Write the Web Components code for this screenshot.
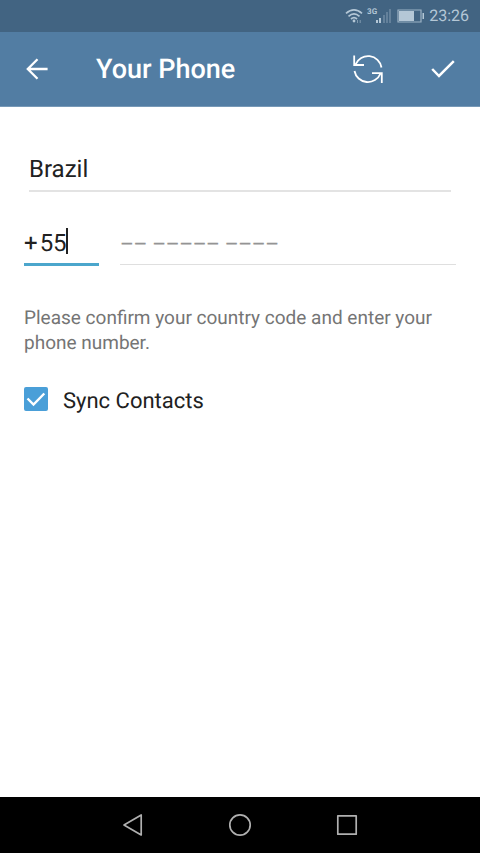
<!DOCTYPE html>
<html lang="en">
<head>
<meta charset="utf-8">
<meta name="viewport" content="width=device-width, initial-scale=1">
<title>Your Phone</title>
<style>
  body { margin: 0; background: #fff; color: #212121; font-family: Roboto, "Liberation Sans", sans-serif; text-rendering: geometricPrecision; }
</style>
</head>
<body>
<phone-screen>
  <status-bar slot="top" time="23:26" network="3G"></status-bar>
  <app-bar slot="top">Your Phone</app-bar>
  <phone-form>
    <country-field></country-field>
    <number-field></number-field>
    <span slot="hint">Please confirm your country code and enter your phone number.</span>
    <check-option slot="options">Sync Contacts</check-option>
  </phone-form>
  <navigation-bar slot="bottom"></navigation-bar>
</phone-screen>

<script>
class BaseElement extends HTMLElement {
  connectedCallback() {
    if (this.shadowRoot) return;
    this.attachShadow({ mode: "open" }).innerHTML =
      "<style>*{box-sizing:border-box}svg{display:block;flex:none}button{border:0;padding:0;background:none;color:inherit;font:inherit;display:grid;place-items:center}input,select{text-rendering:inherit}</style>" +
      this.render();
  }
}

customElements.define("phone-screen", class extends BaseElement {
  render() {
    return `<style>
      :host { display: flex; flex-direction: column; min-height: 100vh; }
      main { flex: 1; }
    </style>
    <slot name="top"></slot>
    <main><slot></slot></main>
    <slot name="bottom"></slot>`;
  }
});

customElements.define("status-bar", class extends BaseElement {
  render() {
    return `<style>
      :host { display: flex; align-items: center; justify-content: flex-end; height: 32px; padding-right: 11px; background: #426482; color: #b4c7d6; font-size: 16px; line-height: 32px; }
      .signal { display: flex; margin-left: 4px; }
      .network { font-size: 8px; line-height: 8px; font-weight: 700; }
      .bars { margin-left: -1px; }
      .battery { margin: 0 4px 0 6px; }
    </style>
    <svg width="18" height="16" viewBox="0 0 18 16" fill="none" stroke="currentColor" stroke-width="1.7" aria-label="Wi-Fi">
      <path d="M1 5.3Q9-1.7 17 5.3M3.5 8.3Q9 3.5 14.5 8.3M6 11Q9 8.4 12 11"/>
      <circle cx="9" cy="13" r="1.4" fill="currentColor" stroke="none"/>
      <path d="M12.5 12v3M15.2 12v3" stroke-width="1" opacity=".55"/>
    </svg>
    <span class="signal">
      <span class="network">${this.getAttribute("network")}</span>
      <svg class="bars" width="15" height="16" viewBox="0 0 15 16" fill="currentColor" aria-label="Signal">
        <path d="M0 12h2v3H0zM3 10h2v5H3z"/><path d="M7 7h2v8H7zM10 4h2v11h-2zM13 1h2v14h-2z" opacity=".3"/>
      </svg>
    </span>
    <svg class="battery" width="28" height="14" viewBox="0 0 28 14" aria-label="Battery">
      <path d="M1 1h23v12H1z" fill="none" stroke="currentColor" stroke-width="1.2" opacity=".8"/>
      <path d="M2 2h15v10H2zM25.5 4H27v6h-1.5z" fill="currentColor"/>
    </svg>
    <time>${this.getAttribute("time")}</time>`;
  }
});

customElements.define("app-bar", class extends BaseElement {
  render() {
    return `<style>
      :host { display: flex; box-sizing: border-box; align-items: center; height: 75px; padding-bottom: 1px; background: #527da3; color: #fff; border-bottom: 1px solid #7799b7; }
      h1 { flex: 1; margin: 0 0 0 22px; font-size: 27px; line-height: 32px; font-weight: 500; }
      button { width: 74px; height: 73px; }
      button:nth-of-type(2) { width: 76px; }
    </style>
    <button type="button" aria-label="Back">
      <svg width="24" height="24" viewBox="0 0 24 24" fill="none" stroke="currentColor" stroke-width="2.3"><path d="M22.6 12H3M12.5 2.3 2.8 12l9.7 9.7"/></svg>
    </button>
    <h1><slot></slot></h1>
    <button type="button" aria-label="Refresh">
      <svg width="32" height="32" viewBox="0 0 32 32" fill="none" stroke="currentColor" stroke-width="1.8">
        <path d="M29.5 14.5A13.6 13.6 0 0 0 3.5 11.5M2.2 2.5V12H12"/>
        <path d="M2.5 18A13.6 13.6 0 0 0 28.5 20.5M29.8 30V20.2H20"/>
      </svg>
    </button>
    <button type="button" aria-label="Done">
      <svg width="24" height="18" viewBox="0 0 24 18" fill="none" stroke="currentColor" stroke-width="2.5"><path d="m1.2 9 6.8 7L22.8 1.2"/></svg>
    </button>`;
  }
});

customElements.define("phone-form", class extends BaseElement {
  render() {
    return `<style>
      :host { display: block; padding: 41px 24px 24px; }
      p { margin: 39px 0 32px; color: #757575; font-size: 19px; line-height: 25px; }
    </style>
    <slot></slot>
    <p><slot name="hint"></slot></p>
    <slot name="options"></slot>`;
  }
});

customElements.define("country-field", class extends BaseElement {
  render() {
    return `<style>
      :host { display: block; margin: 0 5px; }
      select { display: block; appearance: none; width: 100%; height: 44px; padding: 0; border: 0; border-bottom: 2px solid #e3e3e3; border-radius: 0; background: none; color: inherit; font: 24px/32px Roboto, sans-serif; outline: 0; }
    </style>
    <select aria-label="Country"><option>Brazil</option></select>`;
  }
});

customElements.define("number-field", class extends BaseElement {
  render() {
    return `<style>
      :host { display: flex; gap: 21px; margin-top: 31px; align-items: flex-start; font-size: 24px; }
      label { display: flex; align-items: center; width: 75px; height: 43px; border-bottom: 3px solid #4ba6cc; }
      input { display: block; border: 0; padding: 0; margin: 0; background: none; color: inherit; font: inherit; outline: 0; }
      .code { field-sizing: content; margin-left: 2px; caret-color: transparent; }
      .caret { width: 2px; height: 26px; margin: -4px 0 0 -1px; background: #212121; }
      .number { flex: 1; min-width: 0; height: 42px; padding-bottom: 2px; border-bottom: 1px solid #dfdfdf; }
      .number::placeholder { color: #949494; opacity: 1; font-size: 21px; font-weight: 500; }
    </style>
    <label><span>+</span><input class="code" type="text" inputmode="tel" value="55" aria-label="Country code"><span class="caret"></span></label>
    <input class="number" type="tel" placeholder="–– ––––– ––––" aria-label="Phone number">`;
  }
});

customElements.define("check-option", class extends BaseElement {
  render() {
    return `<style>
      :host { display: block; font-size: 22px; line-height: 30px; }
      label { display: flex; gap: 15px; }
      .box { display: grid; flex: none; width: 24px; height: 24px; }
      input, svg { grid-area: 1 / 1; }
      input { appearance: none; width: 24px; height: 24px; margin: 0; border: 2px solid #4a9fd8; border-radius: 2px; }
      input:checked { background: #4a9fd8; }
      input:not(:checked) + svg { visibility: hidden; }
      svg { pointer-events: none; }
    </style>
    <label><span class="box"><input type="checkbox" checked>
      <svg width="24" height="24" viewBox="0 0 24 24" fill="none" stroke="#fff" stroke-width="2.4"><path d="m3.5 11.5 6 6L20.3 6.5"/></svg>
    </span><slot></slot></label>`;
  }
});

customElements.define("navigation-bar", class extends BaseElement {
  render() {
    return `<style>
      :host { display: flex; justify-content: center; gap: 59px; height: 56px; background: #000; color: #b0b0b0; }
      button { width: 48px; height: 56px; }
    </style>
    <button type="button" aria-label="Back"><svg width="24" height="24" viewBox="0 0 24 24" fill="none" stroke="currentColor" stroke-width="1.7" stroke-linejoin="round"><path d="M3 12 20.2 2v20z"/></svg></button>
    <button type="button" aria-label="Home"><svg width="24" height="24" viewBox="0 0 24 24" fill="none" stroke="currentColor" stroke-width="1.7"><circle cx="12" cy="12" r="10.2"/></svg></button>
    <button type="button" aria-label="Recent apps"><svg width="24" height="24" viewBox="0 0 24 24" fill="none" stroke="currentColor" stroke-width="1.7" stroke-linejoin="round"><path d="M2.8 2.8h18.4v18.4H2.8z"/></svg></button>`;
  }
});
</script>
</body>
</html>
